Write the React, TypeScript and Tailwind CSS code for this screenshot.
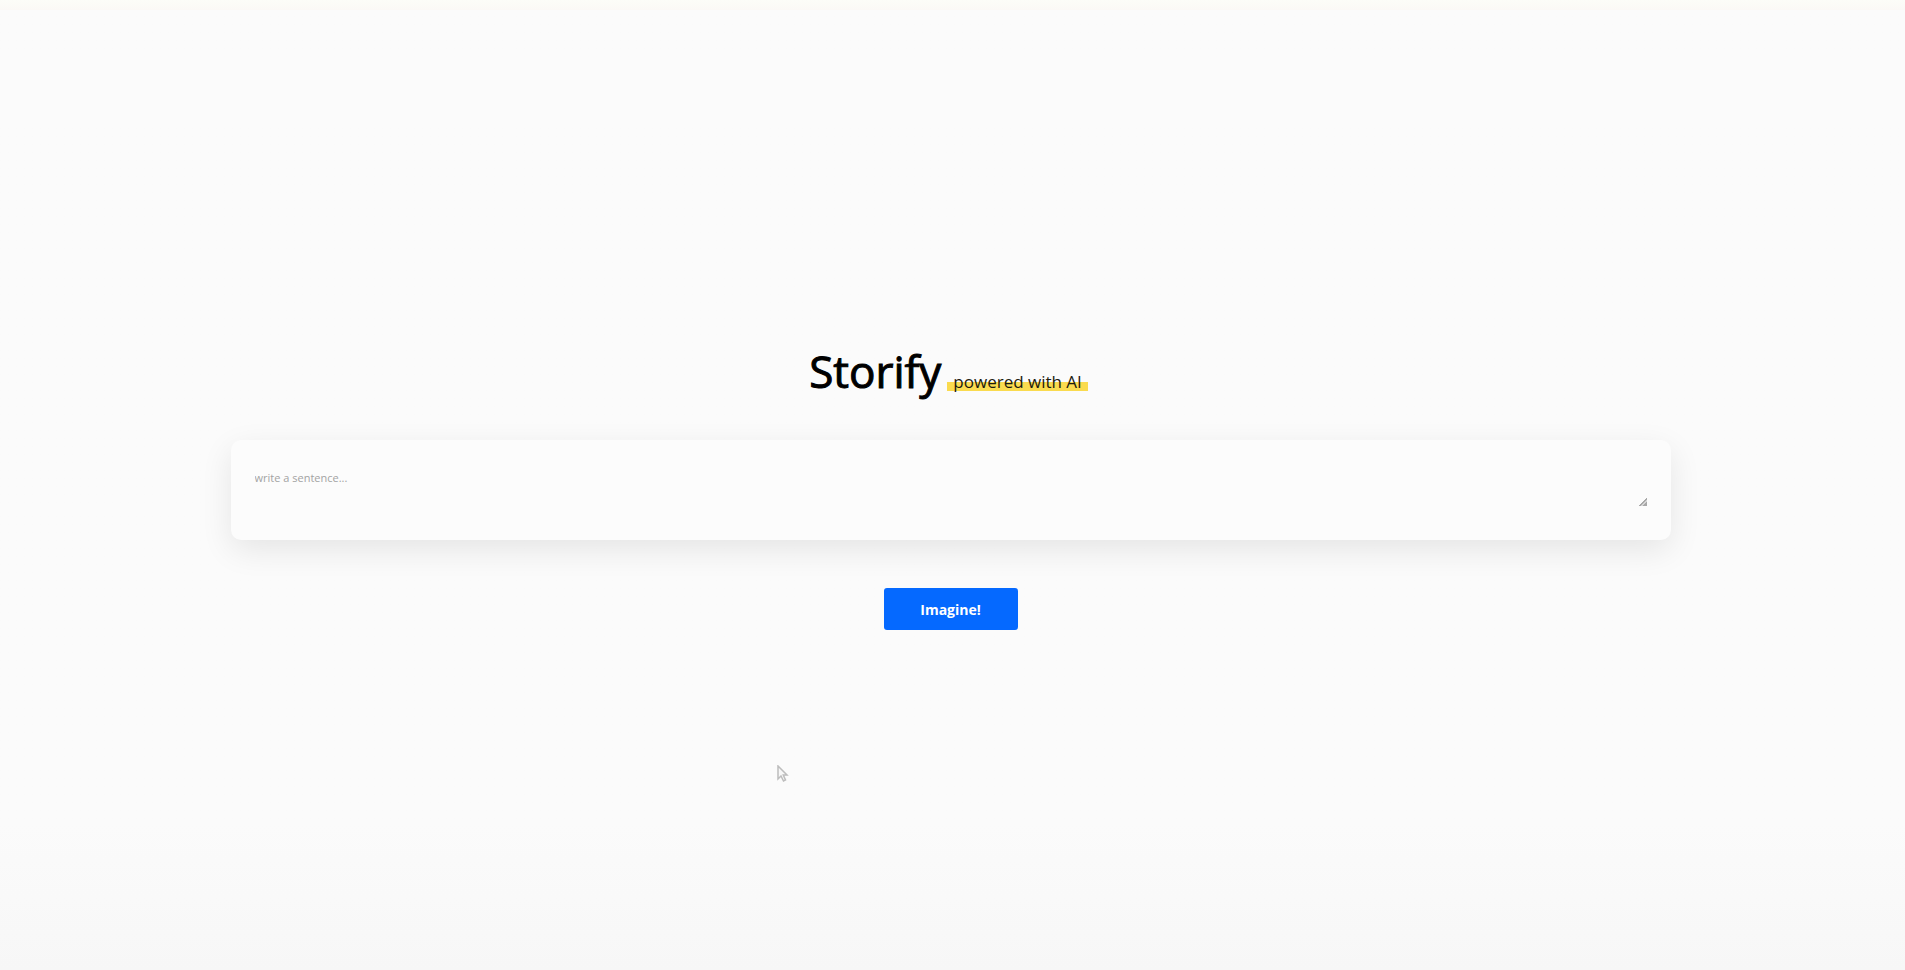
export default function App() {
  return (
    <main className="relative flex min-h-screen flex-col items-center justify-center bg-linear-to-b from-[#fbfbfb] from-85% to-[#f7f7f7] pr-5 pl-4 font-['Open_Sans','Noto_Sans',sans-serif] text-black">
      <div className="absolute inset-x-0 top-0 h-2.5 bg-linear-to-b from-[#fcfdf8] to-[#fbf9f6]" />
      <header className="flex h-16 items-baseline justify-center gap-1.5 pr-1">
        <h1 className="text-[44px] leading-[62px] font-normal [-webkit-text-stroke:1px_black]">
          Storify
        </h1>
        <p className="bg-linear-to-b from-transparent from-50% via-[#fadb4f] via-50% to-[#fadb4f] px-1.5 text-[17px] leading-[18px] text-[#1c1a10]">
          powered with AI
        </p>
      </header>
      <form className="flex w-full flex-col items-center" onSubmit={(e) => e.preventDefault()}>
        <div className="mt-9 flex h-25 w-full max-w-[1440px] rounded-[10px] bg-[#fcfcfc] px-6 pt-[30px] pb-[34px] shadow-[0_10px_32px_rgba(0,0,0,0.09)]">
          <textarea
            aria-label="Story sentence"
            placeholder="write a sentence..."
            className="h-full w-full resize overflow-hidden bg-transparent text-[11px] leading-4 outline-none placeholder:text-[#a3a3a3] [&::-webkit-resizer]:bg-[linear-gradient(135deg,transparent_70%,#a8a8a8_70%,#a8a8a8_78%,#d6d6d6_78%,#d6d6d6_84%,#a8a8a8_84%)]"
          />
        </div>
        <button
          type="submit"
          className="mt-12 h-[42px] w-[134px] rounded-[3px] bg-[#0569ff] pt-px text-sm font-bold text-white"
        >
          Imagine!
        </button>
      </form>
      <svg
        aria-hidden="true"
        viewBox="0 0 12 18"
        className="absolute top-[765px] left-[777px] h-[18px] w-3"
      >
        <path
          d="M1 1v13l3-3 2.500 5 2-1-2.200-5H10z"
          fill="#f7f7f7"
          stroke="#bdbdbd"
          strokeWidth="1.500"
        />
      </svg>
    </main>
  );
}
